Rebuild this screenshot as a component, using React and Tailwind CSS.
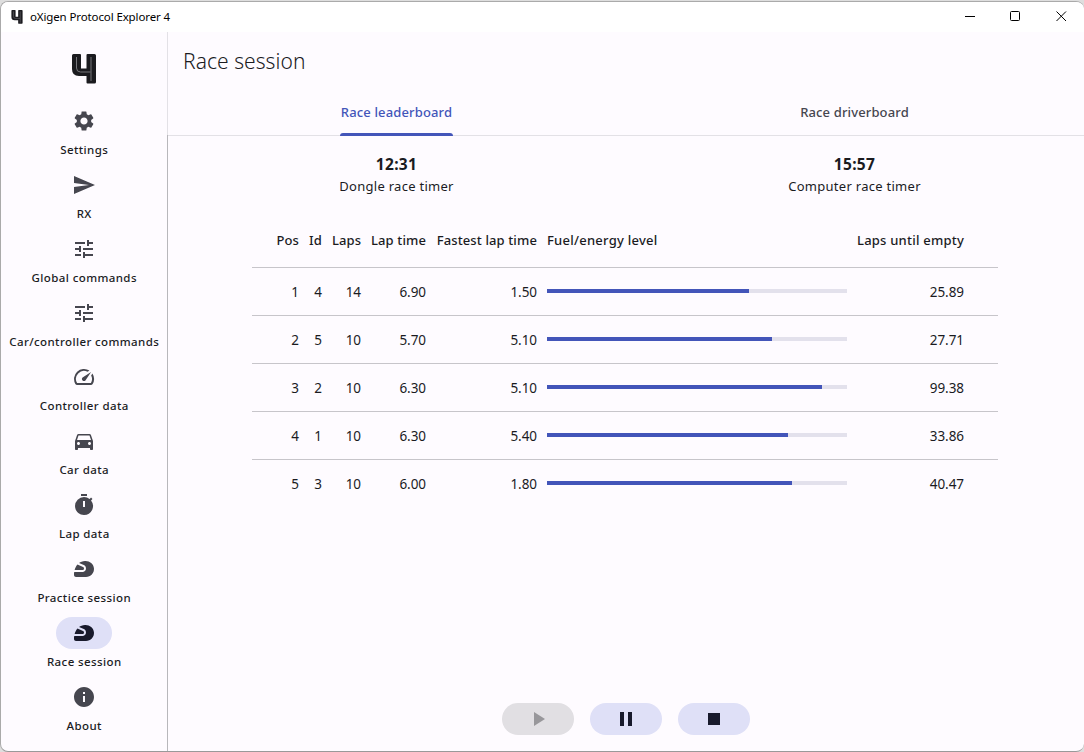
import React from "react";
import { MdSettings, MdSend, MdTune, MdSpeed, MdDirectionsCar, MdTimer, MdSportsMotorsports, MdInfo, MdPlayArrow, MdPause, MdStop } from "react-icons/md";

const NAV = [
  ["Settings", MdSettings],
  ["RX", MdSend],
  ["Global commands", MdTune],
  ["Car/controller commands", MdTune],
  ["Controller data", MdSpeed],
  ["Car data", MdDirectionsCar],
  ["Lap data", MdTimer],
  ["Practice session", MdSportsMotorsports],
  ["Race session", MdSportsMotorsports],
  ["About", MdInfo],
];

const ROWS = [
  [1, 4, 14, "6.90", "1.50", 67.2, "25.89"],
  [2, 5, 10, "5.70", "5.10", 75, "27.71"],
  [3, 2, 10, "6.30", "5.10", 91.8, "99.38"],
  [4, 1, 10, "6.30", "5.40", 80.4, "33.86"],
  [5, 3, 10, "6.00", "1.80", 81.7, "40.47"],
];

const GRID = "grid grid-cols-[46px_13px_29px_55px_101px_300px_107px] gap-x-[10px] pr-[34px] justify-end items-center text-right";

function Logo({ className }) {
  return (
    <svg viewBox="0 0 24 30" className={className} fill="none">
      <path d="M0 1.500Q0 0 1.500 0H8Q9 0 9 1V14.500H14.500V1Q14.500 0 15.500 0H22.500Q24 0 24 1.500V28Q24 29.500 22.500 29.500H15.500Q14.500 29.500 14.500 28.500V22H7Q0 22 0 15Z" fill="#1b1b1f" />
      <path d="M4.500 3V14Q4.500 18 8.500 18H18.500M19 3V27" stroke="#77767b" strokeWidth="1" />
    </svg>
  );
}

function TitleBar() {
  return (
    <header className="flex h-[30px] shrink-0 items-center justify-between bg-white">
      <div className="flex items-center gap-[7px] pl-[10px]">
        <Logo className="h-[14px] w-3" />
        <span className="text-[11.5px] tracking-[-0.12px] text-black">oXigen Protocol Explorer 4</span>
      </div>
      <svg width="120" height="30" viewBox="0 0 120 30" fill="none" stroke="#000">
        <path d="M1 14.500H11" />
        <rect x="46.500" y="9.500" width="9" height="9" rx="1" />
        <path d="M92.500 9.500L102 19M102 9.500L92.500 19" />
      </svg>
    </header>
  );
}

function Sidebar() {
  return (
    <nav className="flex w-[166px] shrink-0 flex-col items-center pt-[22px]">
      <Logo className="h-[30px] w-6" />
      <ul className="mt-[21px] flex flex-col gap-[11px]">
        {NAV.map(([label, Icon]) => {
          const active = label === "Race session";
          return (
            <li key={label} className="flex flex-col items-center gap-[5px]">
              <span className={active ? "flex h-8 w-14 items-center justify-center rounded-full bg-[#dfe0f7] text-[#181a2c]" : "flex h-8 w-14 items-center justify-center text-[#46464f]"}>
                <Icon className="size-6" />
              </span>
              <span className="h-4 pl-[0.5px] text-[11.5px] leading-4 font-medium tracking-[0.4px] whitespace-nowrap">{label}</span>
            </li>
          );
        })}
      </ul>
    </nav>
  );
}

function Timer({ value, label }) {
  return (
    <div className="flex flex-1 flex-col items-center pr-px">
      <span className="text-[15.500px] leading-6 font-bold tracking-[0.3px]">{value}</span>
      <span className="text-[13px] leading-5 tracking-[0.28px]">{label}</span>
    </div>
  );
}

function Leaderboard() {
  return (
    <div className="mx-auto w-[748px] pr-[2px]">
      <div className={`${GRID} h-[55px] pt-0.5 text-[13px] font-medium tracking-[0.12px] whitespace-nowrap`}>
        <span>Pos</span>
        <span>Id</span>
        <span>Laps</span>
        <span>Lap time</span>
        <span>Fastest lap time</span>
        <span className="text-left tracking-[0.25px]">Fuel/energy level</span>
        <span className="tracking-[0.22px]">Laps until empty</span>
      </div>
      {ROWS.map(([pos, id, laps, lap, fastest, fuel, left]) => (
        <div key={pos} className={`${GRID} h-12 border-t border-[#c7c5ca] text-[13.500px] tracking-[-0.05px]`}>
          <span className="pt-0.5">{pos}</span>
          <span className="pt-0.5">{id}</span>
          <span className="pt-0.5">{laps}</span>
          <span className="pt-0.5">{lap}</span>
          <span className="pt-0.5">{fastest}</span>
          <div className="mb-[2px] h-1 bg-[#e3e1ec]">
            <div className="h-full bg-[#4355b9]" style={{ width: `${fuel}%` }} />
          </div>
          <span className="pt-0.5">{left}</span>
        </div>
      ))}
    </div>
  );
}

function Controls() {
  return (
    <div className="mt-auto mb-4 flex justify-center gap-4 text-[#181a2c]">
      <button className="flex h-8 w-[72px] items-center justify-center rounded-full bg-[#e1dfe3] text-[#98979b]"><MdPlayArrow className="size-6" /></button>
      <button className="flex h-8 w-[72px] items-center justify-center rounded-full bg-[#dfe0f7]"><MdPause className="size-6" /></button>
      <button className="flex h-8 w-[72px] items-center justify-center rounded-full bg-[#dfe0f7]"><MdStop className="size-6" /></button>
    </div>
  );
}

export default function App() {
  return (
    <div className="h-[752px] w-[1084px] overflow-hidden bg-[#dedede] pt-px font-['Noto_Sans',sans-serif] text-[#1b1b1f]">
      <div className="flex h-[751px] flex-col overflow-hidden rounded-[8px] border-t border-b border-l border-[#aaaaaa] border-b-[#999999] bg-[#fefbff]">
        <TitleBar />
        <div className="flex min-h-0 flex-1">
          <Sidebar />
          <div className="flex w-px flex-col">
            <div className="h-[103px] bg-[#e3e1e6]" />
            <div className="flex-1 bg-[#b8b7bb]" />
          </div>
          <main className="flex flex-1 flex-col">
            <h1 className="h-[58px] pl-[15px] text-[21px] leading-[58px] font-[350] tracking-[0.05px]">Race session</h1>
            <div className="flex h-[46px] border-b border-[#e3e1e6] text-[13px] font-medium tracking-[0.14px]">
              <div className="flex flex-1 justify-center pr-px">
                <span className="relative h-[46px] leading-[45px] text-[#4355b9]">
                  Race leaderboard
                  <span className="absolute -inset-x-px bottom-0 h-[3px] rounded-t-[3px] bg-[#4355b9]" />
                </span>
              </div>
              <div className="flex flex-1 justify-center pr-px leading-[45px] text-[#46464f]">Race driverboard</div>
            </div>
            <div className="flex pt-4 pb-4">
              <Timer value="12:31" label="Dongle race timer" />
              <Timer value="15:57" label="Computer race timer" />
            </div>
            <Leaderboard />
            <Controls />
          </main>
        </div>
      </div>
    </div>
  );
}
